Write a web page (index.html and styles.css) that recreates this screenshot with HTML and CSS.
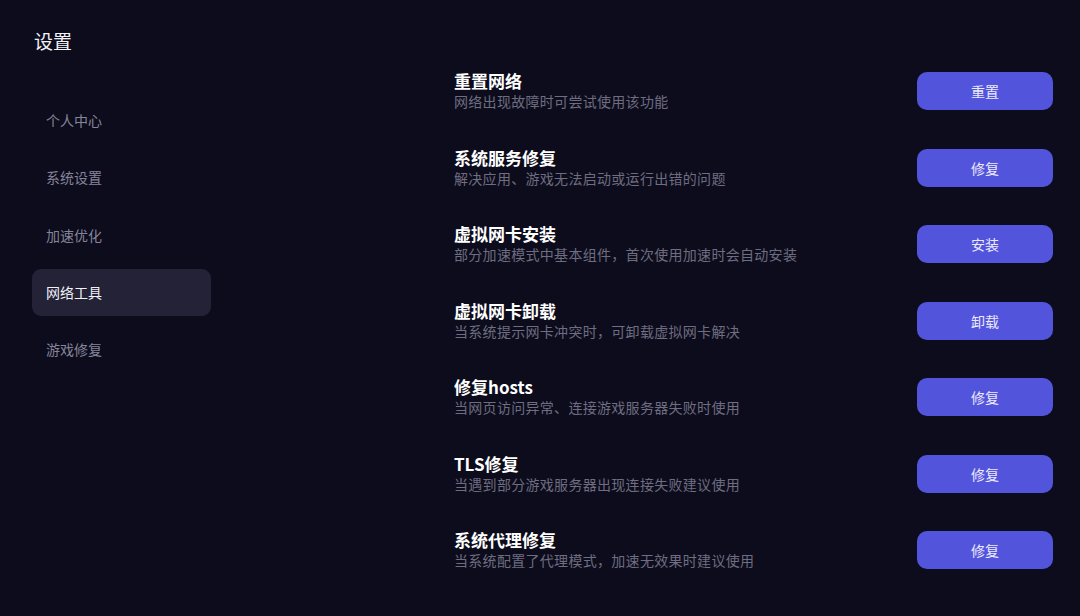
FILE: index.html
```html
<!DOCTYPE html>
<html lang="zh-CN">
<head>
<meta charset="utf-8">
<title>设置</title>
<link rel="stylesheet" href="styles.css">
</head>
<body>
<div class="page">
  <aside class="sidebar">
    <h1 class="title">设置</h1>
    <nav class="nav">
      <div class="nav-item">个人中心</div>
      <div class="nav-item">系统设置</div>
      <div class="nav-item">加速优化</div>
      <div class="nav-item active">网络工具</div>
      <div class="nav-item">游戏修复</div>
    </nav>
  </aside>
  <main class="main">
    <div class="row">
      <div class="info"><div class="name">重置网络</div><div class="desc">网络出现故障时可尝试使用该功能</div></div>
      <button class="btn">重置</button>
    </div>
    <div class="row">
      <div class="info"><div class="name">系统服务修复</div><div class="desc">解决应用、游戏无法启动或运行出错的问题</div></div>
      <button class="btn">修复</button>
    </div>
    <div class="row">
      <div class="info"><div class="name">虚拟网卡安装</div><div class="desc">部分加速模式中基本组件，首次使用加速时会自动安装</div></div>
      <button class="btn">安装</button>
    </div>
    <div class="row">
      <div class="info"><div class="name">虚拟网卡卸载</div><div class="desc">当系统提示网卡冲突时，可卸载虚拟网卡解决</div></div>
      <button class="btn">卸载</button>
    </div>
    <div class="row">
      <div class="info"><div class="name">修复hosts</div><div class="desc">当网页访问异常、连接游戏服务器失败时使用</div></div>
      <button class="btn">修复</button>
    </div>
    <div class="row">
      <div class="info"><div class="name">TLS修复</div><div class="desc">当遇到部分游戏服务器出现连接失败建议使用</div></div>
      <button class="btn">修复</button>
    </div>
    <div class="row">
      <div class="info"><div class="name">系统代理修复</div><div class="desc">当系统配置了代理模式，加速无效果时建议使用</div></div>
      <button class="btn">修复</button>
    </div>
  </main>
</div>
</body>
</html>
```

FILE: styles.css
```css
* { box-sizing: border-box; }
html, body {
  margin: 0;
  padding: 0;
  background: #0d0c1c;
  font-family: "Noto Sans CJK SC", "Noto Sans", sans-serif;
  color: #ffffff;
}
.page {
  display: flex;
  width: 1080px;
  height: 616px;
  overflow: hidden;
}
.sidebar {
  width: 211px;
  padding-left: 32px;
  padding-top: 28px;
  flex-shrink: 0;
}
.title {
  margin: 0 0 0 2px;
  font-size: 19px;
  line-height: 26px;
  font-weight: 400;
  color: #f2f2f6;
}
.nav {
  margin-top: 43px;
  display: flex;
  flex-direction: column;
  gap: 10.3px;
}
.nav-item {
  height: 47px;
  line-height: 47px;
  padding-left: 14px;
  font-size: 14px;
  color: #85849a;
  border-radius: 9px;
}
.nav-item.active {
  background: #232236;
  color: #f0f0f6;
}
.main {
  flex: 1;
  padding: 53px 27px 0 243px;
  display: flex;
  flex-direction: column;
}
.row {
  height: 76.5px;
  display: flex;
  align-items: center;
  justify-content: space-between;
}
.info {
  display: flex;
  flex-direction: column;
}
.name {
  font-size: 17px;
  line-height: 20px;
  font-weight: 700;
  color: #ffffff;
}
.desc {
  font-size: 14px;
  line-height: 20px;
  color: #6e6d81;
  letter-spacing: 0.3px;
}
.btn {
  width: 136px;
  height: 38px;
  border: none;
  border-radius: 10px;
  background: #5354dc;
  color: #eceafd;
  font-family: inherit;
  font-size: 14px;
  padding: 0;
}
```
